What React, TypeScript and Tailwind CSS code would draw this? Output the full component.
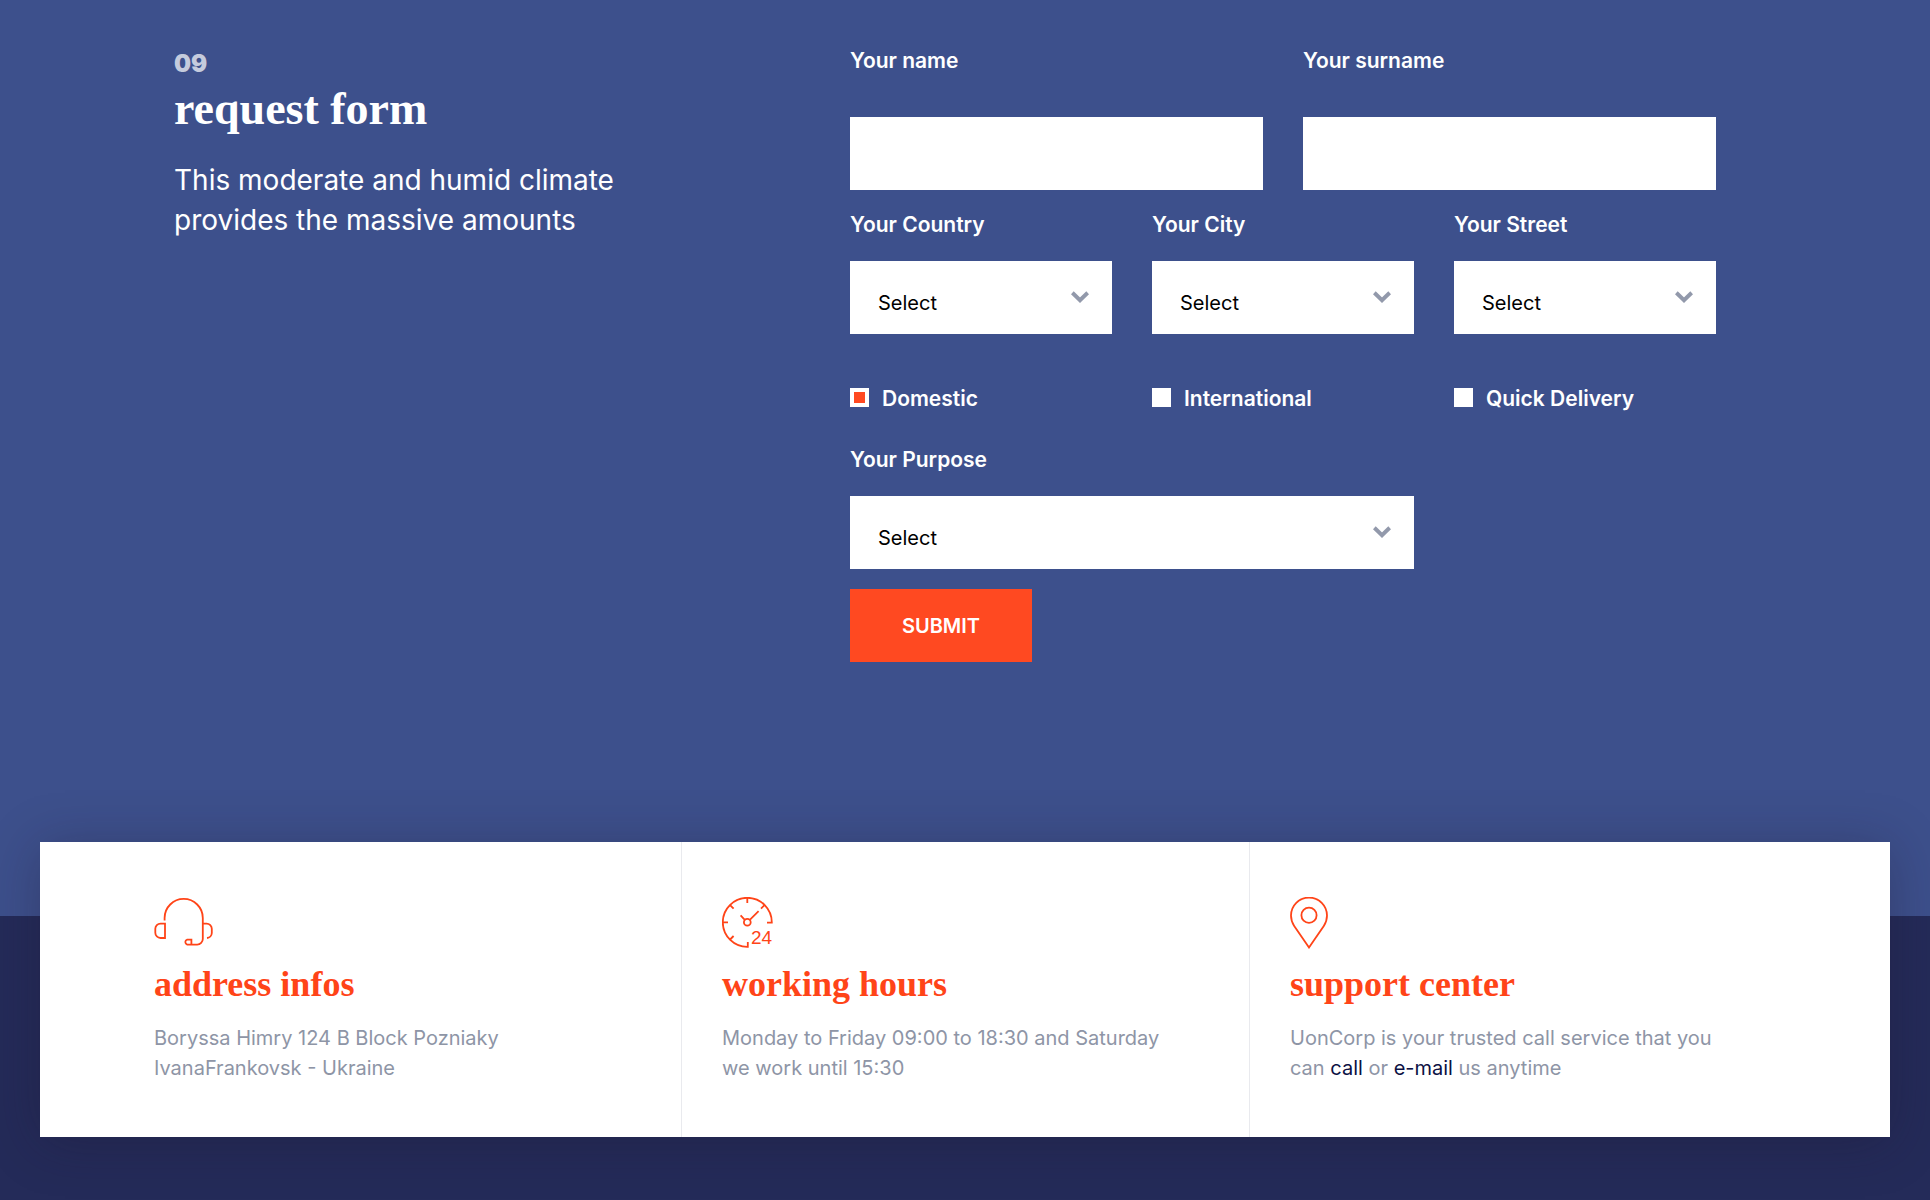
import { useState, type ReactNode } from 'react'

const SERVICES = ['Domestic', 'International', 'Quick Delivery']

function TextField({ id, label }: { id: string; label: string }) {
  return (
    <div className="flex flex-col gap-[41px]">
      <label htmlFor={id} className="text-[21px] leading-[30px] font-semibold">
        {label}
      </label>
      <input id={id} type="text" className="h-[73px] w-full bg-white px-7 text-xl text-black outline-none" />
    </div>
  )
}

function SelectField({ id, label }: { id: string; label: string }) {
  return (
    <div className="flex flex-col gap-[21px]">
      <label htmlFor={id} className="text-[21px] leading-[30px] font-semibold">
        {label}
      </label>
      <div className="relative">
        <select
          id={id}
          className="block h-[73px] w-full appearance-none bg-white px-7 pt-2.5 text-xl text-black outline-none"
        >
          <option>Select</option>
        </select>
        <svg
          viewBox="0 0 18 12"
          className="pointer-events-none absolute top-[30px] right-[23px] h-3 w-[18px]"
          fill="none"
          stroke="#9299ab"
          strokeWidth="4"
        >
          <path d="M1.3 1.8 9 9.2 16.7 1.8" />
        </svg>
      </div>
    </div>
  )
}

function InfoColumn({ icon, title, children }: { icon: ReactNode; title: string; children: ReactNode }) {
  return (
    <div className="border-l border-[#e9eaee] pt-[55px] pr-[76px] pl-10 first:border-transparent">
      <div className="h-[52px] text-[#ff4418]">{icon}</div>
      <h3 className="mt-3 font-['Liberation_Serif',serif] text-[36px] leading-[46px] font-bold text-[#ff4418]">
        {title}
      </h3>
      <p className="mt-4 text-xl leading-[30px] text-[#8e95a6]">{children}</p>
    </div>
  )
}

function HeadsetIcon() {
  return (
    <svg viewBox="0 0 60 52" className="h-[52px] w-[60px]" fill="none" stroke="currentColor" strokeWidth="1.8">
      <path d="M11 26.6V41H6.5A5.2 5.2 0 0 1 1.3 35.8V31.8A5.2 5.2 0 0 1 6.5 26.6Z" />
      <path d="M10.6 23.5V21A19.1 19.1 0 0 1 48.8 21V42A5.6 5.6 0 0 1 43.2 47.6H33.2A2.6 2.6 0 0 1 33.2 42.6H37.4V47.6" />
      <path d="M48.8 26.6H52.6A5.2 5.2 0 0 1 57.8 31.8V36A5.2 5.2 0 0 1 53 41" />
    </svg>
  )
}

function ClockIcon() {
  return (
    <svg viewBox="0 0 52 52" className="h-[52px] w-[52px]" fill="none" stroke="currentColor" strokeWidth="1.8">
      <path d="M45 25.6H49.8A24.5 24.5 0 1 0 25.8 49.8V45" />
      <path d="M25.3 1V6M1 25.3H6M8.1 8.1 11.6 11.6M42.5 8.1 39 11.6M8.1 42.5 11.6 39" />
      <circle cx="25.3" cy="25.3" r="3.4" />
      <path d="M27.8 22.8 36.6 14.2M22.8 22.8 18.6 18.4" />
      <text
        x="29"
        y="47"
        className="font-['Liberation_Sans',sans-serif] text-[19px]"
        fill="currentColor"
        stroke="none"
      >
        24
      </text>
    </svg>
  )
}

function PinIcon() {
  return (
    <svg viewBox="0 0 40 52" className="h-[52px] w-10" fill="none" stroke="currentColor" strokeWidth="1.8">
      <path d="M19 50.5 4.2 29C2.2 26 1 22.5 1 18.6A18 18 0 0 1 37 18.6C37 22.5 35.8 26 33.8 29Z" />
      <circle cx="19" cy="18.3" r="7.6" />
    </svg>
  )
}

export default function App() {
  const [checked, setChecked] = useState<string[]>(['Domestic'])

  const toggle = (name: string) => {
    setChecked((prev) => (prev.includes(name) ? prev.filter((item) => item !== name) : [...prev, name]))
  }

  return (
    <div className="flex min-h-screen flex-col bg-[#242b59] font-['Inter',sans-serif]">
      <section className="grid grid-cols-[636fr_866fr] gap-10 bg-[#3d508c] pt-[46px] pr-[214px] pb-[254px] pl-[174px] text-white">
        <div>
          <div className="text-2xl leading-9 font-black text-[#c5cbdd]">09</div>
          <h2 className="font-['Liberation_Serif',serif] text-[46px] leading-[54px] font-bold">request form</h2>
          <p className="mt-6 max-w-[460px] text-[28px] leading-10">
            This moderate and humid climate provides the massive amounts
          </p>
        </div>

        <form onSubmit={(event) => event.preventDefault()}>
          <div className="grid grid-cols-2 gap-10">
            <TextField id="name" label="Your name" />
            <TextField id="surname" label="Your surname" />
          </div>
          <div className="mt-5 grid grid-cols-3 gap-10">
            <SelectField id="country" label="Your Country" />
            <SelectField id="city" label="Your City" />
            <SelectField id="street" label="Your Street" />
          </div>
          <div className="mt-[50px] grid grid-cols-3 gap-10">
            {SERVICES.map((name) => (
              <label key={name} className="flex items-start gap-[13px] text-[21px] leading-[30px] font-semibold">
                <input
                  type="checkbox"
                  checked={checked.includes(name)}
                  onChange={() => toggle(name)}
                  className="mt-1 size-[19px] shrink-0 appearance-none border-4 border-white bg-white checked:bg-[#ff4921]"
                />
                {name}
              </label>
            ))}
          </div>
          <div className="mt-[31px] grid grid-cols-3 gap-10">
            <div className="col-span-2">
              <SelectField id="purpose" label="Your Purpose" />
            </div>
          </div>
          <button type="submit" className="mt-5 block h-[73px] w-[182px] bg-[#ff4921] text-xl font-semibold">
            SUBMIT
          </button>
        </form>
      </section>

      <section className="flex-1 px-10 pb-16">
        <div className="relative -mt-[74px] grid min-h-[295px] grid-cols-3 bg-white px-[73px] shadow-[0_5px_50px_rgba(30,20,40,0.3)]">
          <InfoColumn icon={<HeadsetIcon />} title="address infos">
            Boryssa Himry 124 B Block Pozniaky
            <br />
            IvanaFrankovsk - Ukraine
          </InfoColumn>
          <InfoColumn icon={<ClockIcon />} title="working hours">
            Monday to Friday 09:00 to 18:30 and Saturday we work until 15:30
          </InfoColumn>
          <InfoColumn icon={<PinIcon />} title="support center">
            UonCorp is your trusted call service that you can{' '}
            <a href="#call" className="text-[#0c1144]">
              call
            </a>{' '}
            or{' '}
            <a href="#email" className="text-[#0c1144]">
              e-mail
            </a>{' '}
            us anytime
          </InfoColumn>
        </div>
      </section>
    </div>
  )
}
